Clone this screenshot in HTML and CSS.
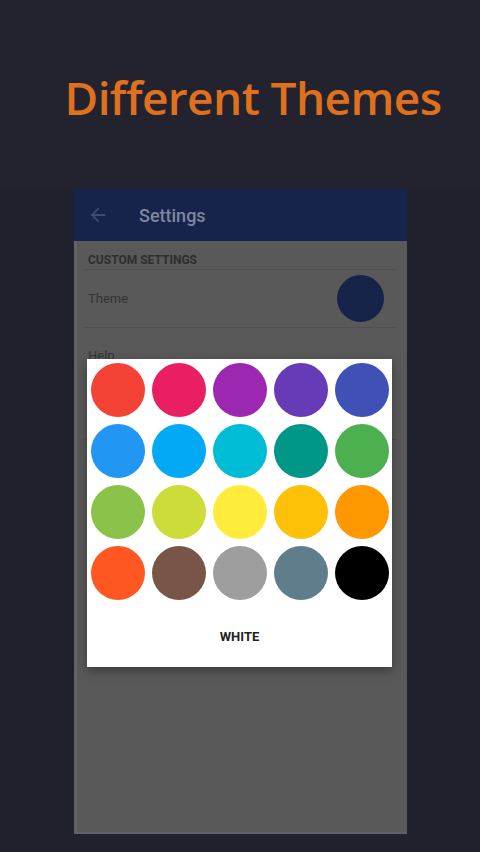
FILE: index.html
```html
<!DOCTYPE html>
<html lang="en">
  <head>
    <meta charset="UTF-8" />
    <title>Different Themes</title>
    <link rel="stylesheet" href="styles.css">
  </head>
  <body>
    <header class="promo">
      <h1>Different Themes</h1>
    </header>

    <!-- Tela do app (escurecida pelo diálogo) -->
    <section class="phone">
      <div class="appbar">
        <svg class="back" viewBox="0 0 24 24" aria-hidden="true">
          <path d="M20 11H7.83l5.59-5.59L12 4l-8 8 8 8 1.41-1.41L7.83 13H20v-2z" />
        </svg>
        <span class="appbar-title">Settings</span>
      </div>
      <div class="prefs">
        <div class="pref-section">CUSTOM SETTINGS</div>
        <div class="pref-row">
          <span>Theme</span>
          <span class="theme-swatch"></span>
        </div>
        <div class="pref-row pref-help">
          <span>Help</span>
        </div>
      </div>

      <!-- Diálogo de cores -->
      <div class="dialog">
        <div class="swatches">
          <span class="dot" style="background:#f44336"></span>
          <span class="dot" style="background:#e91e63"></span>
          <span class="dot" style="background:#9c27b0"></span>
          <span class="dot" style="background:#673ab7"></span>
          <span class="dot" style="background:#3f51b5"></span>
          <span class="dot" style="background:#2196f3"></span>
          <span class="dot" style="background:#03a9f4"></span>
          <span class="dot" style="background:#00bcd4"></span>
          <span class="dot" style="background:#009688"></span>
          <span class="dot" style="background:#4caf50"></span>
          <span class="dot" style="background:#8bc34a"></span>
          <span class="dot" style="background:#cddc39"></span>
          <span class="dot" style="background:#ffeb3b"></span>
          <span class="dot" style="background:#ffc107"></span>
          <span class="dot" style="background:#ff9800"></span>
          <span class="dot" style="background:#ff5722"></span>
          <span class="dot" style="background:#795548"></span>
          <span class="dot" style="background:#9e9e9e"></span>
          <span class="dot" style="background:#607d8b"></span>
          <span class="dot" style="background:#000000"></span>
        </div>
        <button class="btn-white">WHITE</button>
      </div>
    </section>
  </body>
</html>
```

FILE: styles.css
```css
body {
  margin: 0;
  padding: 0;
  background-color: #1f222d;
  font-family: Roboto, "Liberation Sans", sans-serif;
  width: 480px;
  height: 852px;
  overflow: hidden;
}
/* Faixa do título */
.promo {
  height: 189px;
  background-color: #22232e;
  display: flex;
  justify-content: center;
}
.promo h1 {
  margin: 67px 0 0 26px;
  font-family: "Open Sans", sans-serif;
  font-weight: 600;
  font-size: 46px;
  line-height: 60px;
  color: #df701e;
  letter-spacing: -0.6px;
}
/* Tela do telefone */
.phone {
  position: relative;
  margin-left: 74px;
  width: 333px;
  height: 645px;
  background-color: #595959;
  border-left: 3px solid #636363;
  border-bottom: 2px solid #5e616b;
  box-sizing: border-box;
}
.appbar {
  height: 52px;
  background-color: #16234a;
  display: flex;
  align-items: center;
  padding-left: 13px;
  margin-left: -3px;
}
.back {
  width: 22px;
  height: 22px;
  fill: #404a70;
}
.appbar-title {
  margin-left: 30px;
  font-size: 18px;
  font-weight: 500;
  color: #7f87a0;
}
.prefs {
  padding: 0 10px 0 7px;
}
.pref-section {
  height: 29px;
  box-sizing: border-box;
  padding: 12px 0 0 4px;
  font-size: 12px;
  font-weight: 700;
  color: #2e2e2e;
  border-bottom: 1px solid #505050;
}
.pref-row {
  height: 57px;
  display: flex;
  align-items: center;
  justify-content: space-between;
  padding-left: 4px;
  font-size: 13px;
  color: #333;
  border-bottom: 1px solid #505050;
}
.pref-help {
  height: 112px;
  align-items: flex-start;
  padding-top: 20px;
  box-sizing: border-box;
}
.theme-swatch {
  width: 47px;
  height: 47px;
  border-radius: 50%;
  background-color: #16244a;
  margin-right: 13px;
}
/* Diálogo */
.dialog {
  position: absolute;
  left: 10px;
  top: 170px;
  width: 305px;
  height: 308px;
  background-color: #fff;
  box-shadow: 0 4px 10px rgba(0, 0, 0, 0.35);
  display: flex;
  flex-direction: column;
  align-items: center;
}
.swatches {
  display: grid;
  grid-template-columns: repeat(5, 54px);
  gap: 7px;
  padding-top: 4px;
}
.dot {
  width: 54px;
  height: 54px;
  border-radius: 50%;
}
.btn-white {
  margin-top: 25px;
  border: none;
  background: none;
  font-family: Roboto, sans-serif;
  font-size: 13px;
  font-weight: 700;
  color: #232323;
  padding: 4px 10px;
}
```
